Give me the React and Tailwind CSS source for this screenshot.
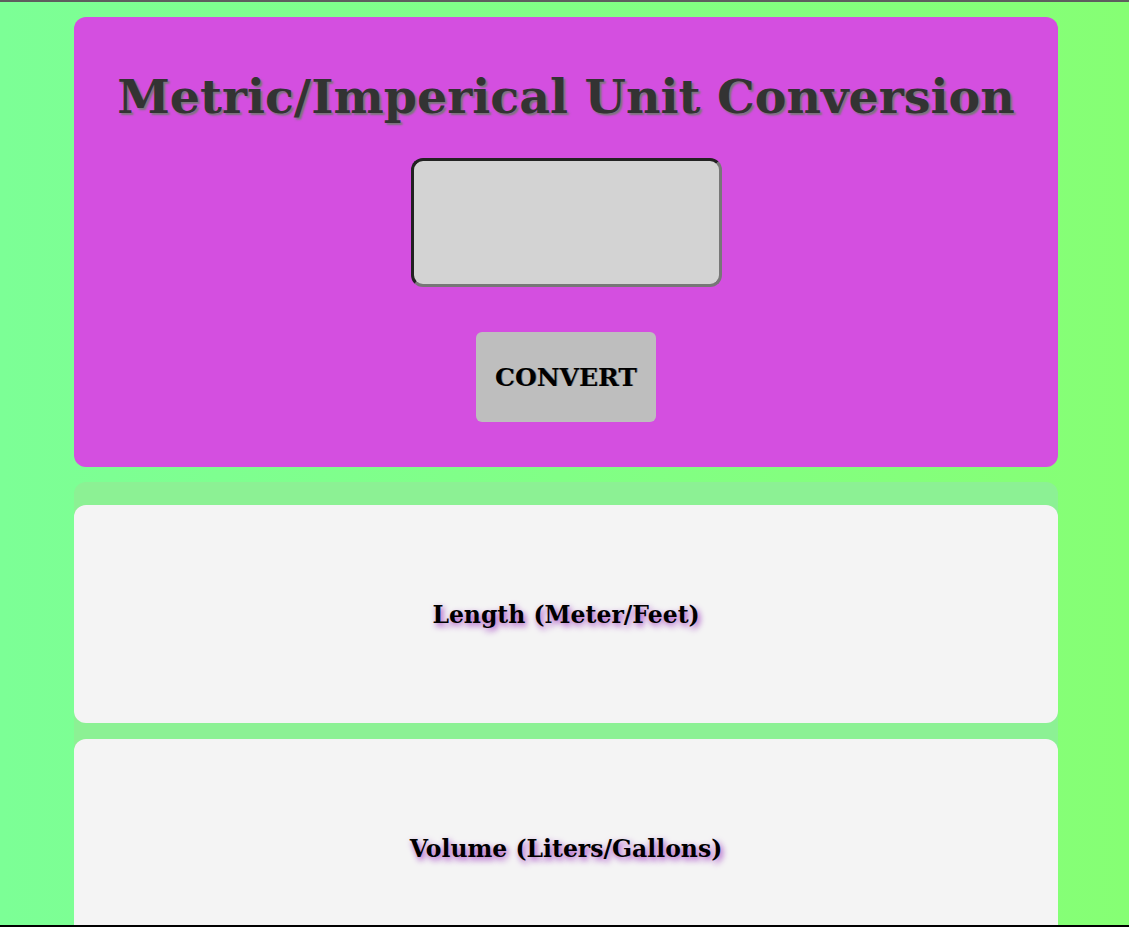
export default function App() {
  const serif = { fontFamily: '"DejaVu Serif", Georgia, serif' };
  return (
    <div
      className="h-[927px] overflow-hidden border-t-2 border-b-2 border-t-[#5e5e5e] border-b-black bg-gradient-to-r from-[#7cff96] to-[#86ff74]"
      style={serif}
    >
      <div className="ml-[74px] w-[984px] pt-[15px]">
        <div className="flex flex-col items-center rounded-xl bg-[#d44fe0] pt-[50px] pb-[45px]">
          <h1 className="text-[47.5px] font-bold leading-[58px] text-[#333333] [text-shadow:2px_2px_2px_#777777]">
            Metric/Imperical Unit Conversion
          </h1>
          <input
            type="text"
            className="mt-[33px] h-[129px] w-[311px] rounded-xl border-[3px] border-t-[#222222] border-l-[#222222] border-r-[#777777] border-b-[#777777] bg-[#d3d3d3] outline-none"
          />
          <button className="mt-[45px] flex h-[90px] w-[180px] items-center justify-center rounded-md bg-[#bebebe] pt-[2px] text-[25px] font-bold text-black [text-shadow:1px_0px_0px_rgba(0,0,0,0.3)]">
            CONVERT
          </button>
        </div>
        <div className="mt-[15px] flex flex-col gap-4 rounded-xl bg-[#8cf194] pt-[23px]">
          <div className="flex h-[218px] items-center justify-center rounded-xl bg-[#f4f4f4] pt-[4px]">
            <span className="text-[23.5px] font-bold text-black [text-shadow:2px_3px_6px_#a040c0]">
              Length (Meter/Feet)
            </span>
          </div>
          <div className="flex h-[218px] items-center justify-center rounded-xl bg-[#f4f4f4] pt-[4px]">
            <span className="text-[23.5px] font-bold text-black [text-shadow:2px_3px_6px_#a040c0]">
              Volume (Liters/Gallons)
            </span>
          </div>
        </div>
      </div>
    </div>
  );
}
